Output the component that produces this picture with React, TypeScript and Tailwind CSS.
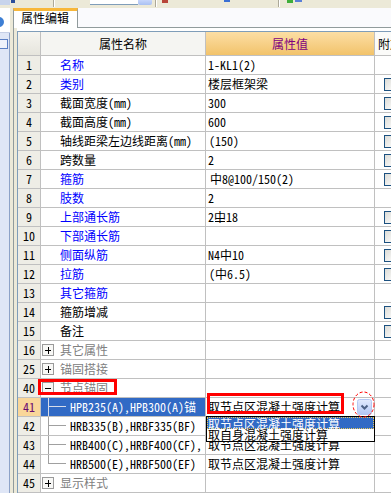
import type { ReactNode } from "react";

type Kind = "blue" | "black" | "group" | "child";

interface Row {
  no: string;
  name: string;
  kind: Kind;
  value?: ReactNode;
  check?: boolean;
  open?: boolean;
  last?: boolean;
  selected?: boolean;
}

const ANCHOR = "取节点区混凝土强度计算";

// 三级钢符号：中字加一道底横
const Steel3 = () => (
  <span className="relative inline-block">
    中
    <span className="absolute left-[1px] right-[1px] bottom-[4px] h-px bg-black" />
  </span>
);

const rows: Row[] = [
  { no: "1", name: "名称", kind: "blue", value: "1-KL1(2)" },
  { no: "2", name: "类别", kind: "blue", value: "楼层框架梁", check: true },
  { no: "3", name: "截面宽度(mm)", kind: "black", value: "300", check: true },
  { no: "4", name: "截面高度(mm)", kind: "black", value: "600", check: true },
  { no: "5", name: "轴线距梁左边线距离(mm)", kind: "black", value: <span className="pl-[1px]">(150)</span>, check: true },
  { no: "6", name: "跨数量", kind: "black", value: "2", check: true },
  { no: "7", name: "箍筋", kind: "blue", value: <span className="pl-[2px]">中8@100/150(2)</span>, check: true },
  { no: "8", name: "肢数", kind: "blue", value: "2" },
  {
    no: "9",
    name: "上部通长筋",
    kind: "blue",
    value: (
      <>
        2<Steel3 />18
      </>
    ),
    check: true,
  },
  { no: "10", name: "下部通长筋", kind: "blue", check: true },
  { no: "11", name: "侧面纵筋", kind: "blue", value: "N4中10", check: true },
  { no: "12", name: "拉筋", kind: "blue", value: <span className="pl-[1px]">(中6.5)</span>, check: true },
  { no: "13", name: "其它箍筋", kind: "blue" },
  { no: "14", name: "箍筋增减", kind: "black", check: true },
  { no: "15", name: "备注", kind: "black", check: true },
  { no: "16", name: "其它属性", kind: "group" },
  { no: "25", name: "锚固搭接", kind: "group" },
  { no: "40", name: "节点锚固", kind: "group", open: true },
  { no: "41", name: "HPB235(A),HPB300(A)锚", kind: "child", value: ANCHOR, selected: true },
  { no: "42", name: "HRB335(B),HRBF335(BF)", kind: "child", value: ANCHOR },
  { no: "43", name: "HRB400(C),HRBF400(CF),", kind: "child", value: ANCHOR },
  { no: "44", name: "HRB500(E),HRBF500(EF)", kind: "child", value: ANCHOR, last: true },
  { no: "45", name: "显示样式", kind: "group" },
];

function PlusBox({ open }: { open?: boolean }) {
  return (
    <svg width="12" height="12" viewBox="0 0 12 12" className="shrink-0">
      <rect x="0.5" y="0.5" width="11" height="11" fill="#f8f8f6" stroke="#9a9a9a" />
      <path d="M3 6.5h6" stroke="#000" />
      {!open && <path d="M6.5 3v7" stroke="#000" />}
    </svg>
  );
}

function ComboButton() {
  return (
    <svg width="15" height="16" viewBox="0 0 15 16" className="shrink-0">
      <defs>
        <linearGradient id="cb" x1="0" y1="0" x2="0" y2="1">
          <stop offset="0" stopColor="#e3ebfd" />
          <stop offset="1" stopColor="#b3c7f5" />
        </linearGradient>
      </defs>
      <rect x="0.5" y="0.5" width="14" height="15" rx="2" fill="url(#cb)" stroke="#b4c8f3" />
      <path d="M4.5 6.5l3 3 3-3" fill="none" stroke="#4d6185" strokeWidth="2" />
    </svg>
  );
}

function Checkbox() {
  return (
    <div className="ml-[9px] w-[13px] h-[13px] shrink-0 border border-[#1c5180] bg-linear-to-br from-[#dcdcd7] to-white" />
  );
}

function NameCell({ row }: { row: Row }) {
  if (row.kind === "group") {
    return (
      <div className="flex items-center h-full pl-[1px] gap-[6px] text-[#808080]">
        <PlusBox open={row.open} />
        <span className="whitespace-nowrap">{row.name}</span>
      </div>
    );
  }
  if (row.kind === "child") {
    const line = row.selected ? "border-[#d6dcea]" : "border-[#a0a0a0]";
    return (
      <div
        className={`flex h-full pl-[7px] ${row.selected ? "bg-[#316ac5] text-white" : "text-black"}`}
      >
        <div className="w-[18px] shrink-0 flex flex-col">
          <div className={`h-[9px] border-l border-b ${line}`} />
          <div className={`flex-1 ${row.last ? "" : `border-l ${line}`}`} />
        </div>
        <span className="pl-[4px] whitespace-nowrap overflow-hidden">{row.name}</span>
      </div>
    );
  }
  return (
    <div
      className={`h-full pl-[19px] whitespace-nowrap overflow-hidden ${
        row.kind === "blue" ? "text-[#0000ff]" : "text-black"
      }`}
    >
      {row.name}
    </div>
  );
}

function GridRow({ row }: { row: Row }) {
  return (
    <div className="flex h-[19px] leading-[18px] shrink-0">
      <div
        className={`w-[23px] shrink-0 border-r border-b border-[#c0c0c0] text-center ${
          row.selected ? "bg-[#f9d699] text-[#6a0a70]" : "bg-[#eeede6]"
        }`}
      >
        {row.no}
      </div>
      <div className="w-[165px] shrink-0 border-r border-b border-[#c0c0c0] overflow-hidden">
        <NameCell row={row} />
      </div>
      <div className="w-[169px] shrink-0 border-r border-b border-[#c0c0c0] flex items-center justify-between pl-[2px] pr-[2px] whitespace-nowrap overflow-hidden">
        <span>{row.value}</span>
        {row.selected && <ComboButton />}
      </div>
      <div className="flex-1 min-w-0 border-b border-[#c0c0c0] flex items-center overflow-hidden">
        {row.check && <Checkbox />}
      </div>
    </div>
  );
}

function Grid() {
  return (
    <div className="flex flex-col border-t border-l border-[#7f9db9]">
      <div className="flex h-[24px] leading-[23px] shrink-0">
        <div className="w-[23px] shrink-0 border-r border-b border-[#c0c0c0] bg-linear-to-b from-[#f6f5f0] to-[#e6e5dd]" />
        <div className="w-[165px] shrink-0 border-r border-b border-[#c0c0c0] bg-[#f5f5f2] text-center">
          属性名称
        </div>
        <div className="w-[169px] shrink-0 border-r border-b border-[#c0c0c0] bg-linear-to-b from-[#fcdea4] to-[#f2c36a] text-center text-[#800080]">
          属性值
        </div>
        <div className="flex-1 min-w-0 border-b border-[#c0c0c0] bg-[#fbfbf9] pl-[3px] whitespace-nowrap overflow-hidden">
          附加
        </div>
      </div>
      {rows.map((row) => (
        <GridRow key={row.no} row={row} />
      ))}
    </div>
  );
}

function Toolbar() {
  return (
    <div className="h-[8px] shrink-0 flex items-start bg-[#ece9d8] overflow-hidden">
      <div className="w-[10px] h-[5px] bg-[#c8d4ec]" />
      <div className="ml-[1px] w-[4px] h-[3px] bg-[#2a4e9c]" />
      <div className="ml-[38px] w-[2px] h-[7px] border-l border-[#aca899] border-r border-r-white" />
      <div className="ml-[35px] w-[48px] h-[5px] bg-white border-b border-[#7f9db9]" />
      <div className="w-[14px] h-[5px] bg-linear-to-b from-[#c7d6fb] to-[#a9c0f2] rounded-b-[2px]" />
      <div className="ml-[3px] w-[2px] h-[7px] border-l border-[#aca899] border-r border-r-white" />
      <div className="ml-[5px] w-[6px] h-[3px] bg-[#b8453a]" />
      <div className="ml-[56px] w-[6px] h-[2px] bg-[#3b6fd4]" />
      <div className="ml-[48px] w-[2px] h-[7px] border-l border-[#aca899] border-r border-r-white" />
      <div className="ml-[7px] flex gap-[2px]">
        <div className="w-[6px] h-[3px] bg-[#3fae3a]" />
        <div className="w-[7px] h-[2px] bg-[#5a7fd8]" />
      </div>
    </div>
  );
}

function LeftPanel() {
  return (
    <div className="w-[13px] shrink-0 flex">
      <div className="w-[10px] flex flex-col">
        <div className="h-[25px] bg-white border-b border-[#c5cfe6]">
          <svg width="10" height="25" viewBox="0 0 10 25">
            <circle cx="-1" cy="14" r="5" fill="#3d7fd4" />
          </svg>
        </div>
        <div className="flex-1 bg-[#dfe6f6] border-r border-[#8da2c8] pt-[6px]">
          <div className="w-[8px] h-[10px] border border-l-0 border-[#5b7fc4] bg-[#eef2fb]" />
        </div>
      </div>
      <div className="w-[3px] bg-[#ece9d8]" />
    </div>
  );
}

function TabStrip() {
  return (
    <div className="h-[20px] shrink-0 flex">
      <div className="w-[65px] shrink-0 border-l border-r border-[#919b9c] border-t-[3px] border-t-[#f8b73a] bg-white pl-[7px] leading-[14px]">
        属性编辑
      </div>
      <div className="flex-1 bg-[#fafafd] border-b border-[#919b9c]" />
    </div>
  );
}

export default function App() {
  return (
    <div className="relative w-[391px] h-[493px] overflow-hidden bg-[#ece9d8] flex flex-col text-[12px] text-black font-['Noto_Sans_Mono_CJK_SC','Noto_Sans_CJK_SC',sans-serif]">
      <Toolbar />
      <div className="flex-1 flex min-h-0">
        <LeftPanel />
        <div className="flex-1 flex flex-col min-w-0">
          <TabStrip />
          <div className="flex-1 flex min-h-0">
            <div className="w-[4px] shrink-0 border-l border-[#919b9c] bg-[#ece9d8]" />
            <div className="flex-1 flex flex-col bg-white pt-[3px] min-w-0">
              <Grid />
            </div>
          </div>
        </div>
      </div>

      {/* 下拉列表 */}
      <div className="absolute left-[206px] top-[416px] w-[169px] h-[26px] border border-black bg-white leading-[12px]">
        <div className="h-[12px] bg-[#316ac5] text-white border border-dotted border-[#e8c75a] whitespace-nowrap">
          {ANCHOR}
        </div>
        <div className="h-[12px] pl-[1px] whitespace-nowrap">取自身混凝土强度计算</div>
      </div>

      {/* 标注 */}
      <div className="absolute left-[38px] top-[379px] w-[79px] h-[16px] border-[3px] border-[#ff0000]" />
      <div className="absolute left-[207px] top-[393px] w-[137px] h-[21px] border-[3px] border-[#ff0000]" />
      <svg className="absolute left-[352px] top-[391px]" width="23" height="27" viewBox="0 0 23 27">
        <ellipse cx="11.5" cy="13.5" rx="10.5" ry="12.5" fill="none" stroke="#ff0000" strokeDasharray="3 2" />
      </svg>
    </div>
  );
}
